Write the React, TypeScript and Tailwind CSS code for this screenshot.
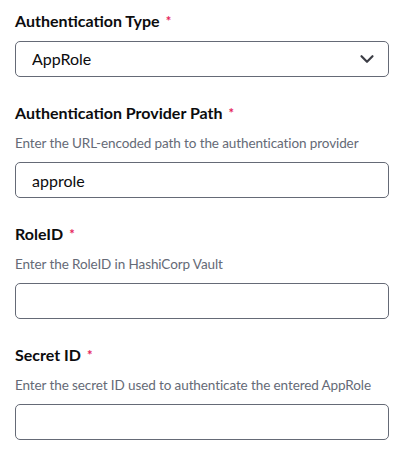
import { ChevronDown } from "lucide-react"

interface Field {
  label: string
  help?: string
  value?: string
  select?: boolean
}

const fields: Field[] = [
  { label: "Authentication Type", value: "AppRole", select: true },
  {
    label: "Authentication Provider Path",
    help: "Enter the URL-encoded path to the authentication provider",
    value: "approle",
  },
  { label: "RoleID", help: "Enter the RoleID in HashiCorp Vault" },
  { label: "Secret ID", help: "Enter the secret ID used to authenticate the entered AppRole" },
]

export default function App() {
  return (
    <div className="min-h-screen bg-white px-[15px] pt-[9px] font-['Lato',sans-serif]">
      <form className="flex w-[374px] flex-col gap-6">
        {fields.map((field) => (
          <div key={field.label} className="flex flex-col">
            <label className="flex items-center gap-[6px] text-[16px] font-bold leading-6 text-[#0c0c0e]">
              {field.label}
              <span className="text-[13px] font-bold text-[#e5225a]">*</span>
            </label>
            {field.help && (
              <p className="mt-2 whitespace-nowrap text-[13.5px] leading-5 tracking-[-0.1px] text-[#656a76]">
                {field.help}
              </p>
            )}
            {field.select ? (
              <div className="relative mt-2">
                <select
                  defaultValue={field.value}
                  className="h-9 w-full appearance-none rounded-[5px] border border-[#656a76] bg-white pl-4 text-[16px] text-[#0c0c0e] outline-none"
                >
                  <option>AppRole</option>
                  <option>Token</option>
                </select>
                <ChevronDown
                  size={22}
                  strokeWidth={2.4}
                  className="pointer-events-none absolute right-[11px] top-[7px] text-[#3b3d45]"
                />
              </div>
            ) : (
              <input
                defaultValue={field.value}
                className="mt-[9px] h-9 rounded-[5px] border border-[#656a76] pl-4 text-[16px] text-[#0c0c0e] outline-none"
              />
            )}
          </div>
        ))}
      </form>
    </div>
  )
}
